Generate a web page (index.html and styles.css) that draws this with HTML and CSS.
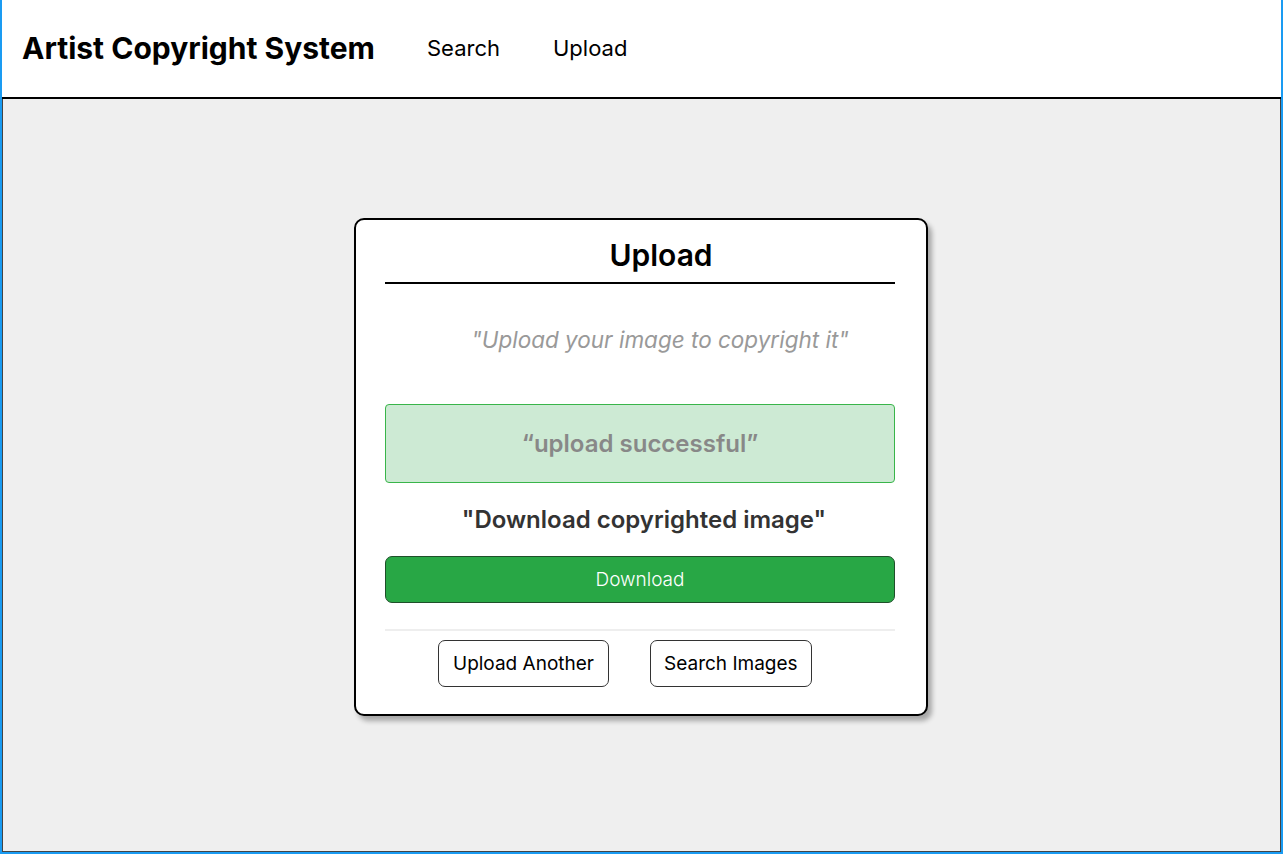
FILE: index.html
```html
<!DOCTYPE html>
<html lang="en">
<head>
<meta charset="utf-8">
<title>Artist Copyright System</title>
<link rel="stylesheet" href="styles.css">
</head>
<body>
<div class="frame">
  <header class="topbar">
    <h1 class="brand">Artist Copyright System</h1>
    <nav class="nav">
      <a class="nav-link" href="#">Search</a>
      <a class="nav-link" href="#">Upload</a>
    </nav>
  </header>
  <main class="main">
    <section class="card">
      <h2 class="card-title">Upload</h2>
      <div class="title-rule"></div>
      <p class="hint">"Upload your image to copyright it"</p>
      <div class="success">“upload successful”</div>
      <p class="download-label">"Download copyrighted image"</p>
      <button class="btn-download" type="button">Download</button>
      <div class="sep"></div>
      <div class="actions">
        <button class="btn-outline" type="button">Upload Another</button>
        <button class="btn-outline" type="button">Search Images</button>
      </div>
    </section>
  </main>
</div>
</body>
</html>
```

FILE: styles.css
```css
* { box-sizing: border-box; }
html, body { margin: 0; padding: 0; height: 100%; }
body {
  font-family: Inter, "Noto Sans", "Liberation Sans", sans-serif;
  color: #000;
  background: #fff;
}
.frame {
  height: 854px;
  display: flex;
  flex-direction: column;
  border-left: 2px solid #1a9bf2;
  border-right: 2px solid #1a9bf2;
  border-bottom: 2px solid #1a9bf2;
}
.topbar {
  height: 99px;
  flex: 0 0 99px;
  display: flex;
  align-items: center;
  padding: 0 0 2px 20px;
  border-bottom: 2px solid #000;
  background: #fff;
}
.brand {
  margin: 0;
  font-size: 30px;
  font-weight: 700;
  letter-spacing: 0;
}
.nav { display: flex; gap: 53px; margin-left: 52px; }
.nav-link {
  color: #000;
  text-decoration: none;
  font-size: 22px;
}
.main {
  flex: 1;
  background: #efefef;
  border-left: 1px solid #444;
  border-right: 1px solid #444;
  border-bottom: 1px solid #444;
  display: flex;
  justify-content: center;
  align-items: flex-start;
  padding-top: 119px;
  padding-right: 1px;
}
.card {
  width: 574px;
  background: #fff;
  border: 2px solid #000;
  border-radius: 10px;
  box-shadow: 4px 5px 5px rgba(0,0,0,0.3);
  padding: 18px 31px 27px 29px;
  display: flex;
  flex-direction: column;
}
.card-title {
  margin: 0;
  text-align: center;
  font-size: 30px;
  font-weight: 600;
  line-height: 34px;
  padding-left: 42px;
}
.title-rule {
  height: 2px;
  background: #000;
  margin-top: 10px;
}
.hint {
  margin: 41px 0 0 0;
  text-align: center;
  font-style: italic;
  font-size: 22.5px;
  line-height: 30px;
  color: #999;
  padding-left: 40px;
}
.success {
  margin-top: 49px;
  height: 79px;
  background: #cdead4;
  border: 1px solid #39b54a;
  border-radius: 4px;
  display: flex;
  align-items: center;
  justify-content: center;
  font-size: 24px;
  font-weight: 600;
  color: #888;
}
.download-label {
  margin: 21px 0 0 0;
  text-align: center;
  font-size: 24px;
  font-weight: 600;
  line-height: 32px;
  color: #333;
  padding-left: 8px;
}
.btn-download {
  margin-top: 20px;
  height: 47px;
  width: 100%;
  background: #28a745;
  border: 1px solid #1f4f2a;
  border-radius: 7px;
  color: #fff;
  font-family: inherit;
  font-size: 19px;
  font-weight: 300;
}
.sep {
  margin-top: 26px;
  height: 2px;
  background: #eee;
}
.actions {
  display: flex;
  gap: 41px;
  margin-top: 9px;
  padding-left: 53px;
}
.btn-outline {
  height: 47px;
  padding: 0 14px;
  background: #fff;
  border: 1px solid #333;
  border-radius: 7px;
  font-family: inherit;
  font-size: 19px;
  color: #000;
}
.btn-outline + .btn-outline { padding: 0 13px; }
```
